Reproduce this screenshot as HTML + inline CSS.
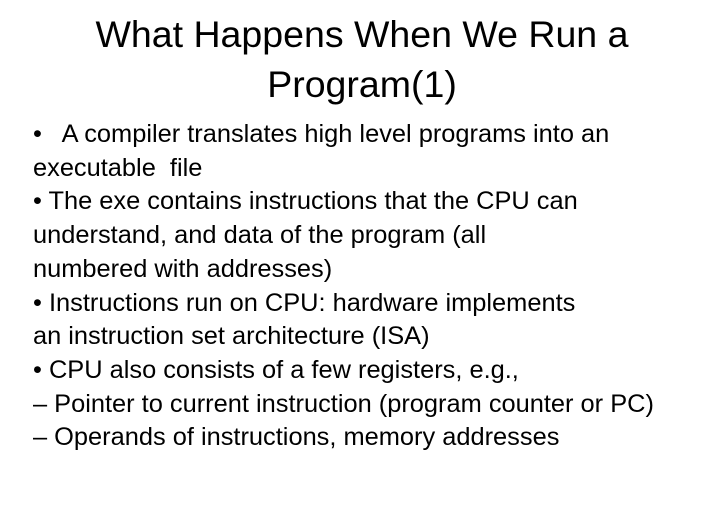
<!DOCTYPE html>
<html><head><meta charset="utf-8"><style>
html,body{margin:0;padding:0;background:#fff;}
body{width:710px;height:510px;position:relative;overflow:hidden;font-family:"Liberation Sans",sans-serif;color:#000;}
.t{position:absolute;left:7px;width:710px;text-align:center;font-size:37.5px;line-height:50px;white-space:nowrap;}
.b{position:absolute;left:33px;font-size:25.4px;line-height:33.7px;white-space:nowrap;top:118px;}
</style></head><body>
<div class="t" style="top:9px">What Happens When We Run a</div>
<div class="t" style="top:59px">Program(1)</div>
<div class="b">
<div>•&nbsp;&nbsp; A compiler translates high level programs into an</div>
<div>executable&nbsp; file</div>
<div>• The exe contains instructions that the CPU can</div>
<div>understand, and data of the program (all</div>
<div>numbered with addresses)</div>
<div>• Instructions run on CPU: hardware implements</div>
<div>an instruction set architecture (ISA)</div>
<div>• CPU also consists of a few registers, e.g.,</div>
<div>– Pointer to current instruction (program counter or PC)</div>
<div>– Operands of instructions, memory addresses</div>
</div>
</body></html>
